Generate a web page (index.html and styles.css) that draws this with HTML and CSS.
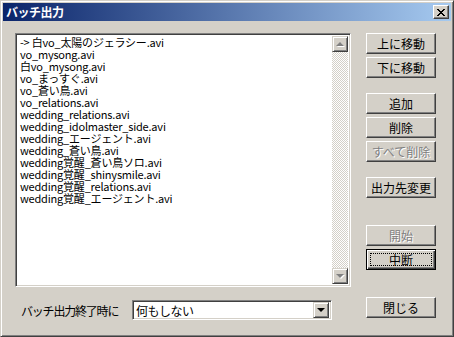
FILE: index.html
```html
<!DOCTYPE html>
<html lang="ja">
<head>
    <meta charset="UTF-8">
    <title>バッチ出力</title>
    <link rel="stylesheet" href="styles.css">
</head>
<body>
    <div class="window">
        <!-- Title bar -->
        <div class="titlebar">
            <span class="title">バッチ出力</span>
            <button class="close-btn" aria-label="閉じる">
                <svg width="8" height="7" viewBox="0 0 8 7">
                    <path d="M0 0h2v1h1v1h2v-1h1v-1h2v1h-1v1h-1v1h-1v1h1v1h1v1h1v1h-2v-1h-1v-1h-2v1h-1v1h-2v-1h1v-1h1v-1h1v-1h-1v-1h-1v-1h-1z" fill="#000"/>
                </svg>
            </button>
        </div>

        <div class="client">
            <!-- File list -->
            <div class="listbox">
                <ul class="items">
                    <li>-&gt; 白vo_太陽のジェラシー.avi</li>
                    <li>vo_mysong.avi</li>
                    <li>白vo_mysong.avi</li>
                    <li>vo_まっすぐ.avi</li>
                    <li>vo_蒼い鳥.avi</li>
                    <li>vo_relations.avi</li>
                    <li>wedding_relations.avi</li>
                    <li>wedding_idolmaster_side.avi</li>
                    <li>wedding_エージェント.avi</li>
                    <li>wedding_蒼い鳥.avi</li>
                    <li>wedding覚醒_蒼い鳥ソロ.avi</li>
                    <li>wedding覚醒_shinysmile.avi</li>
                    <li>wedding覚醒_relations.avi</li>
                    <li>wedding覚醒_エージェント.avi</li>
                </ul>
                <div class="scrollbar">
                    <div class="arrow-btn"><span class="tri-up"></span></div>
                    <div class="track"></div>
                    <div class="arrow-btn"><span class="tri-down"></span></div>
                </div>
            </div>

            <!-- Side buttons -->
            <div class="side">
                <button class="btn">上に移動</button>
                <button class="btn">下に移動</button>
                <button class="btn group">追加</button>
                <button class="btn">削除</button>
                <button class="btn" disabled>すべて削除</button>
                <button class="btn group">出力先変更</button>
                <button class="btn group-wide" disabled>開始</button>
                <button class="btn default"><span class="focus">中断</span></button>
            </div>

            <!-- Bottom row -->
            <div class="bottom">
                <span class="label">バッチ出力終了時に</span>
                <div class="combo">
                    <span class="combo-text">何もしない</span>
                    <div class="arrow-btn"><span class="tri-down dark"></span></div>
                </div>
            </div>
            <div class="side-bottom">
                <button class="btn">閉じる</button>
            </div>
        </div>
    </div>
</body>
</html>
```

FILE: styles.css
```css
/* Windows classic dialog */
:root {
    --face: #d4d0c8;
    --shadow: #808080;
    --dark: #404040;
    --light: #ffffff;
}

* {
    box-sizing: border-box;
}

body {
    margin: 0;
    padding: 0;
    background: var(--face);
    font-family: "Noto Sans CJK JP", "DejaVu Sans", sans-serif;
    font-size: 12px;
    color: #000;
}

.window {
    width: 454px;
    height: 337px;
    background: var(--face);
    border: 1px solid;
    border-color: var(--face) var(--dark) var(--dark) var(--face);
    box-shadow: inset 1px 1px var(--light), inset -1px -1px var(--shadow);
    padding: 2px;
    display: flex;
    flex-direction: column;
}

.titlebar {
    height: 18px;
    background: linear-gradient(to right, #0a246a, #a6caf0);
    display: flex;
    align-items: center;
    justify-content: space-between;
    padding: 0 2px 0 3px;
}

.title {
    color: #fff;
    font-weight: bold;
    font-size: 12px;
    line-height: 14px;
    letter-spacing: -0.5px;
}

.close-btn {
    width: 16px;
    height: 14px;
    padding: 0;
    background: var(--face);
    border: 1px solid;
    border-color: var(--light) var(--dark) var(--dark) var(--light);
    box-shadow: inset -1px -1px var(--shadow);
    display: flex;
    align-items: center;
    justify-content: center;
}

.client {
    flex: 1;
    display: grid;
    grid-template-columns: 336px 70px;
    grid-template-rows: 254px auto;
    column-gap: 15px;
    row-gap: 10px;
    padding: 12px 0 0 12px;
}

/* List box */
.listbox {
    display: flex;
    background: #fff;
    border: 1px solid;
    border-color: var(--shadow) var(--light) var(--light) var(--shadow);
    box-shadow: inset 1px 1px var(--dark), inset -1px -1px var(--face);
    padding: 2px;
}

.items {
    flex: 1;
    list-style: none;
    margin: 0;
    padding: 0 0 0 2px;
    font-size: 11px;
    line-height: 12px;
    letter-spacing: -0.2px;
}

.items li {
    height: 12px;
    white-space: nowrap;
}

.scrollbar {
    width: 16px;
    display: flex;
    flex-direction: column;
}

.track {
    flex: 1;
    background-image: conic-gradient(#fff 25%, var(--face) 0 50%, #fff 0 75%, var(--face) 0);
    background-size: 2px 2px;
}

.arrow-btn {
    width: 16px;
    height: 16px;
    background: var(--face);
    border: 1px solid;
    border-color: var(--face) var(--dark) var(--dark) var(--face);
    box-shadow: inset 1px 1px var(--light), inset -1px -1px var(--shadow);
    display: flex;
    align-items: center;
    justify-content: center;
}

.tri-up,
.tri-down {
    width: 0;
    height: 0;
    border-left: 4px solid transparent;
    border-right: 4px solid transparent;
}

.tri-up {
    border-bottom: 4px solid var(--shadow);
    filter: drop-shadow(1px 1px 0 #fff);
}

.tri-down {
    border-top: 4px solid var(--shadow);
    filter: drop-shadow(1px 1px 0 #fff);
}

.tri-down.dark {
    border-top-color: #000;
    filter: none;
}

/* Buttons */
.side {
    display: flex;
    flex-direction: column;
}

.btn {
    width: 70px;
    height: 21px;
    margin-bottom: 3px;
    padding: 0;
    font-family: inherit;
    font-size: 12px;
    color: #000;
    background: var(--face);
    border: 1px solid;
    border-color: var(--light) var(--dark) var(--dark) var(--light);
    box-shadow: inset -1px -1px var(--shadow), inset 1px 1px var(--face);
    display: flex;
    align-items: center;
    justify-content: center;
}

.btn.group {
    margin-top: 12px;
}

.btn.group-wide {
    margin-top: 24px;
}

.btn:disabled {
    color: var(--shadow);
    text-shadow: 1px 1px 0 #fff;
}

.btn.default {
    border: 1px solid #000;
    box-shadow: inset 1px 1px var(--light), inset -1px -1px var(--dark), inset -2px -2px var(--shadow);
    padding: 3px;
}

.focus {
    flex: 1;
    align-self: stretch;
    display: flex;
    align-items: center;
    justify-content: center;
    border: 1px dotted #000;
}

/* Bottom row */
.bottom {
    display: flex;
    align-items: center;
    padding-top: 3px;
    height: 23px;
}

.label {
    width: 117px;
    padding-left: 6px;
    letter-spacing: -1.2px;
}

.combo {
    width: 200px;
    height: 20px;
    display: flex;
    align-items: center;
    background: #fff;
    border: 1px solid;
    border-color: var(--shadow) var(--light) var(--light) var(--shadow);
    box-shadow: inset 1px 1px var(--dark), inset -1px -1px var(--face);
    padding: 2px;
}

.combo-text {
    flex: 1;
    padding-left: 1px;
    letter-spacing: -0.5px;
}

.side-bottom {
    display: flex;
}
```
